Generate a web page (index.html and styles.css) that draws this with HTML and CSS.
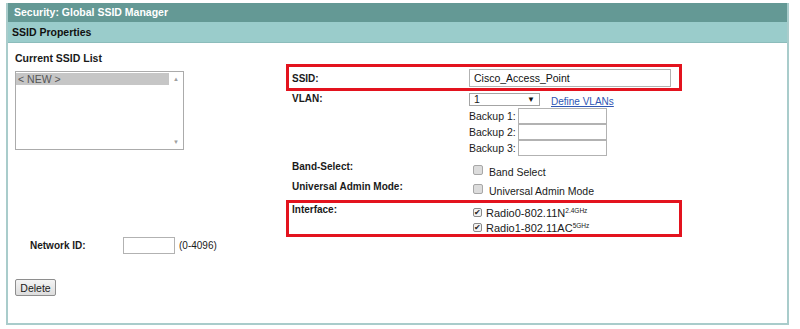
FILE: index.html
```html
<!DOCTYPE html>
<html>
<head>
<meta charset="utf-8">
<link rel="stylesheet" href="styles.css">
</head>
<body>
<div class="panel">
  <div class="title-bar">Security: Global SSID Manager</div>
  <div class="sub-bar">SSID Properties</div>
  <div class="content">
    <div class="columns">
      <div class="left-col">
        <div class="list-title">Current SSID List</div>
        <div class="listbox">
          <div class="list-items">
            <div class="list-item selected">&lt; NEW &gt;</div>
          </div>
          <div class="list-scroll">
            <span class="arrow">&#9650;</span>
            <span class="arrow">&#9660;</span>
          </div>
        </div>
      </div>
      <div class="right-col">
        <div class="row highlight ssid-row">
          <div class="label">SSID:</div>
          <div class="value"><div class="textbox ssid-input">Cisco_Access_Point</div></div>
        </div>
        <div class="row vlan-row">
          <div class="label">VLAN:</div>
          <div class="value vlan-value">
            <div class="vlan-line">
              <div class="select"><span>1</span><span class="caret">&#9660;</span></div>
              <a class="link" href="#">Define VLANs</a>
            </div>
            <div class="backup"><span class="backup-label">Backup 1:</span><div class="textbox backup-input"></div></div>
            <div class="backup"><span class="backup-label">Backup 2:</span><div class="textbox backup-input"></div></div>
            <div class="backup"><span class="backup-label">Backup 3:</span><div class="textbox backup-input"></div></div>
          </div>
        </div>
        <div class="row check-row band-row">
          <div class="label">Band-Select:</div>
          <div class="value check-value"><span class="cb"></span><span class="cb-text">Band Select</span></div>
        </div>
        <div class="row check-row admin-row">
          <div class="label">Universal Admin Mode:</div>
          <div class="value check-value"><span class="cb"></span><span class="cb-text">Universal Admin Mode</span></div>
        </div>
        <div class="row highlight iface-row">
          <div class="label">Interface:</div>
          <div class="value iface-value">
            <div class="iface-line"><span class="cb checked"></span><span>Radio0-802.11N<sup>2.4GHz</sup></span></div>
            <div class="iface-line"><span class="cb checked"></span><span>Radio1-802.11AC<sup>5GHz</sup></span></div>
          </div>
        </div>
      </div>
    </div>
    <div class="netid-row">
      <div class="netid-label">Network ID:</div>
      <div class="textbox netid-input"></div>
      <span class="netid-range">(0-4096)</span>
    </div>
    <div class="button-row">
      <div class="button">Delete</div>
    </div>
  </div>
</div>
</body>
</html>
```

FILE: styles.css
```css
html, body {
  margin: 0;
  padding: 0;
  background: #ffffff;
}

body {
  font-family: "Liberation Sans", Arial, sans-serif;
  font-size: 10px;
  color: #1a1a1a;
}

.panel {
  margin: 3px 0 0 6px;
  width: 779px;
  height: 320px;
  border-left: 2px solid #a9cccb;
  border-right: 2px solid #a9cccb;
  border-bottom: 2px solid #a9cccb;
  display: flex;
  flex-direction: column;
}

.title-bar {
  height: 19px;
  line-height: 19px;
  background: #649995;
  color: #ffffff;
  font-weight: bold;
  font-size: 10.5px;
  padding-left: 6px;
}

.sub-bar {
  height: 20px;
  line-height: 20px;
  background: #9acccb;
  border-bottom: 1px solid #8cbcbb;
  color: #111;
  font-weight: bold;
  font-size: 10.5px;
  padding-left: 4px;
}

.content {
  display: flex;
  flex-direction: column;
}

.columns {
  display: flex;
}

.left-col {
  width: 271px;
  padding-left: 7px;
  padding-top: 9px;
}

.list-title {
  font-weight: bold;
  font-size: 10.5px;
  line-height: 12px;
  height: 12px;
}

.listbox {
  margin-top: 7px;
  width: 167px;
  height: 77px;
  border: 1px solid #ababab;
  display: flex;
  background: #fff;
}

.list-items {
  flex: 1;
}

.list-item {
  height: 12px;
  line-height: 12px;
  padding-left: 2px;
  color: #555;
  font-size: 10.5px;
}

.list-item.selected {
  background: #c6c6c6;
  margin-top: 1px;
}

.list-scroll {
  width: 14px;
  display: flex;
  flex-direction: column;
  justify-content: space-between;
  align-items: center;
  padding: 4px 0 4px;
}

.arrow {
  font-size: 6px;
  color: #a0a0a0;
  line-height: 6px;
}

.right-col {
  width: 396px;
  padding-top: 21px;
}

.row {
  display: grid;
  grid-template-columns: 177px 1fr;
  padding-left: 6px;
}

.label {
  font-weight: bold;
  line-height: 12px;
}

.highlight {
  border: 3px solid #e3131e;
  padding-left: 3px;
}

.ssid-row {
  padding-top: 2px;
  padding-bottom: 1px;
  height: 18px;
  align-items: center;
}

.ssid-row .label {
  padding-top: 1px;
}

.textbox {
  box-sizing: border-box;
  border: 1px solid #b2b2b2;
  background: #fff;
  line-height: 14px;
  padding-left: 3px;
  color: #111;
}

.ssid-input {
  width: 202px;
  height: 18px;
  line-height: 16px;
  font-size: 10.5px;
  padding-left: 4px;
}

.vlan-row {
  margin-top: 2px;
}

.vlan-value {
  display: flex;
  flex-direction: column;
}

.vlan-line {
  display: flex;
  align-items: center;
  height: 13px;
  margin-bottom: 2px;
}

.select {
  box-sizing: border-box;
  width: 71px;
  height: 13px;
  border: 1px solid #a4a4a4;
  display: flex;
  justify-content: space-between;
  align-items: center;
  padding: 0 4px 0 4px;
  font-size: 10.5px;
  line-height: 11px;
}

.caret {
  font-size: 8px;
  color: #111;
}

.link {
  margin-left: 11px;
  color: #2f56b4;
  text-decoration: underline;
  margin-top: 3px;
}

.backup {
  display: flex;
  align-items: center;
  height: 16px;
}

.backup-label {
  width: 49px;
  font-size: 10.5px;
}

.backup-input {
  width: 89px;
  height: 16px;
}

.check-row {
  height: 19px;
  align-items: start;
}

.band-row {
  margin-top: 3px;
}

.band-row .label {
  padding-top: 2px;
}

.admin-row {
  height: 20px;
}

.admin-row .label {
  padding-top: 3px;
}

.check-value {
  display: flex;
  align-items: center;
  padding-top: 3px;
  font-size: 10.5px;
}

.cb {
  box-sizing: border-box;
  width: 10px;
  height: 10px;
  margin-left: 4px;
  border: 1px solid #a7a7a7;
  border-radius: 2px;
  background: #dcdcdc;
  display: inline-flex;
  align-items: center;
  justify-content: center;
  flex: none;
}

.cb-text {
  margin-left: 6px;
  margin-top: 4px;
}

.cb.checked {
  background: #f2f2f2;
  border-color: #8a8a8a;
  width: 9px;
  height: 9px;
}

.cb.checked::after {
  content: "\2714";
  font-size: 8px;
  line-height: 8px;
  color: #222;
}

.iface-row {
  margin-top: 2px;
  padding-top: 0px;
  height: 31px;
}

.iface-row .label {
  padding-top: 1px;
}

.iface-value {
  display: flex;
  flex-direction: column;
  padding-top: 2px;
}

.iface-line {
  display: flex;
  align-items: center;
  height: 15px;
  font-size: 11px;
}

.iface-line .cb {
  margin-right: 4px;
}

sup {
  font-size: 6.5px;
  vertical-align: 4px;
  line-height: 0;
}

.netid-row {
  display: flex;
  align-items: center;
  height: 17px;
  padding-left: 22px;
}

.netid-label {
  width: 93px;
  font-weight: bold;
}

.netid-input {
  width: 52px;
  height: 17px;
}

.netid-range {
  margin-left: 4px;
}

.button-row {
  margin-top: 25px;
  padding-left: 7px;
}

.button {
  box-sizing: border-box;
  width: 41px;
  height: 17px;
  border: 1px solid #8e8e8e;
  border-radius: 2px;
  background: linear-gradient(#f4f4f4, #dddddd);
  display: flex;
  align-items: center;
  justify-content: center;
  font-size: 10.5px;
}
```
